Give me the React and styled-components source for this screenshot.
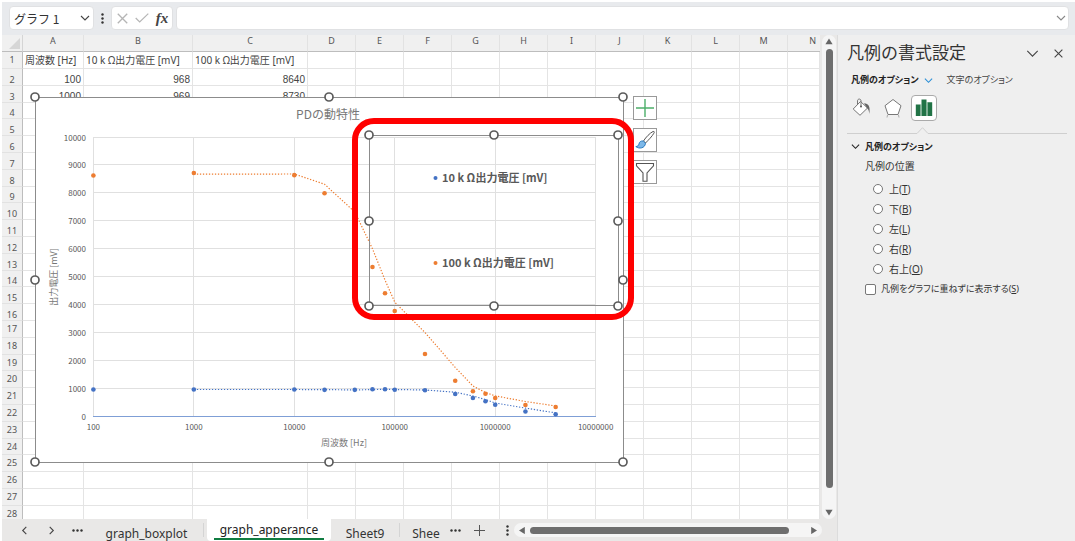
import React, { useState } from "react";
import styled, { createGlobalStyle, css } from "styled-components";

const jp = `"Noto Sans", "Noto Sans CJK JP", sans-serif`;
const jpUi = `"Noto Sans CJK JP", "Noto Sans", sans-serif`;

const GlobalStyle = createGlobalStyle`
  *, *::before, *::after { box-sizing: border-box; }
  body { margin: 0; background: #fff; overflow: hidden; }
  button, input { font: inherit; color: inherit; }
  svg { flex: none; }
`;

const Window = styled.div`
  display: flex;
  flex-direction: column;
  height: 100vh;
  padding: 2px 0 0 2px;
  font-family: ${jp};
  font-size: 12px;
  color: #333;
`;

const IconButton = styled.button`
  display: inline-flex;
  align-items: center;
  justify-content: center;
  width: ${(p) => p.$w || 20}px;
  height: 20px;
  flex: none;
  padding: 0;
  border: 0;
  background: none;
  color: ${(p) => p.$color || "#444"};
`;

/* Formula bar */
const FormulaBar = styled.header`
  display: flex;
  align-items: flex-start;
  flex: none;
  height: 33px;
  padding: 4px 6px 0 7px;
  background: #e8eaed;
`;

const Field = styled.div`
  display: flex;
  align-items: center;
  height: 24px;
  border: 1px solid #e0e1e3;
  border-radius: 4px;
  background: #fff;
`;

const NameBox = styled(Field)`
  width: 85px;
  padding-left: 4px;
`;

const NameInput = styled.input`
  width: 62px;
  height: 20px;
  padding: 0;
  border: 0;
  outline: 0;
  background: none;
  font-family: ${jpUi};
  font-size: 12px;
`;

const BarGrip = styled.div`
  display: flex;
  align-items: center;
  justify-content: center;
  width: 17px;
  height: 24px;
`;

const FormulaActions = styled(Field)`
  width: 62px;
  margin-right: 3px;
`;

const FormulaField = styled(Field)`
  flex: 1;
`;

const FormulaInput = styled.input`
  flex: 1;
  min-width: 0;
  height: 20px;
  border: 0;
  outline: 0;
  background: none;
`;

const Fx = styled.span`
  font-family: "Liberation Serif", serif;
  font-size: 15px;
  font-style: italic;
  font-weight: 700;
  line-height: 18px;
`;

/* Workspace */
const Workspace = styled.div`
  display: flex;
  flex: 1;
  min-height: 0;
`;

const Book = styled.main`
  display: flex;
  flex-direction: column;
  flex: 1;
  min-width: 0;
  background: #e9e8e7;
`;

const SheetRow = styled.div`
  display: flex;
  flex: 1;
  min-height: 0;
`;

const SheetView = styled.div`
  position: relative;
  flex: 1;
  min-width: 0;
  overflow: hidden;
  background: #fff;
`;

const Grid = styled.table`
  width: 100%;
  table-layout: fixed;
  border-collapse: separate;
  border-spacing: 0;
`;

const Col = styled.col`
  width: ${(p) => (p.$w ? `${p.$w}px` : "auto")};
`;

const ColumnHead = styled.th`
  height: 17px;
  padding: 0;
  border-right: 1px solid #e2e2e2;
  border-bottom: 1px solid #bdbdbd;
  background: #f0f0f0;
  color: #555;
  font-size: 9px;
  font-weight: 400;
  line-height: 12px;
  vertical-align: top;
  text-align: center;

  &:last-child {
    padding-right: 4px;
    border-right: 0;
    text-align: right;
  }
`;

const Corner = styled.td`
  padding: 0;
  border-right: 1px solid #d5d5d5;
  border-bottom: 1px solid #bdbdbd;
  background: #f0f0f0;
  line-height: 0;
  text-align: right;
`;

const Row = styled.tr`
  height: 17px;

  &:nth-child(5n + 4) {
    height: 16px;
  }
`;

const seat = css`
  padding: 0;
  line-height: 10px;
  vertical-align: ${(p) => (p.$low ? "bottom" : "middle")};
`;

const RowHead = styled.th`
  ${seat}
  border-right: 1px solid #bdbdbd;
  border-bottom: 1px solid #e2e2e2;
  background: #f0f0f0;
  color: #555;
  font-size: 9px;
  font-weight: 400;
  text-align: center;
`;

const Cell = styled.td`
  ${seat}
  padding-left: 2px;
  padding-right: 2px;
  border-right: 1px solid #e4e4e4;
  border-bottom: 1px solid #e4e4e4;
  color: #444;
  font-family: ${(p) => (p.$number ? `"Liberation Sans", sans-serif` : jp)};
  font-size: 10px;
  white-space: nowrap;
  text-align: ${(p) => (p.$number ? "right" : "left")};
`;

/* Items floating over the cells */
const ChartFrame = styled.figure`
  position: absolute;
  left: 28px;
  top: 57px;
  margin: 0;
  line-height: 0;
`;

const ChartTools = styled.div`
  position: absolute;
  left: 631px;
  top: 61px;
  display: flex;
  flex-direction: column;
  gap: 8px;
`;

const ChartTool = styled.button`
  display: flex;
  align-items: center;
  justify-content: center;
  width: 24px;
  height: 24px;
  padding: 0;
  border: 1px solid #999;
  background: #fff;
`;

const Highlight = styled.div`
  position: absolute;
  left: 350px;
  top: 83px;
  width: 282px;
  height: 202px;
  border: 6px solid #f00;
  border-radius: 22px;
  pointer-events: none;
`;

/* Scroll bars */
const VScroll = styled.div`
  display: flex;
  flex-direction: column;
  align-items: center;
  gap: 4px;
  width: 14px;
  margin: 0 1px 0 2px;
  padding: 3px 0;
  border-radius: 7px;
  background: #f5f5f5;
`;

const VThumb = styled.div`
  flex: 1;
  width: 7px;
  margin-bottom: 17px;
  border-radius: 4px;
  background: #6e6e6e;
`;

const HScroll = styled.div`
  display: flex;
  align-items: center;
  gap: 4px;
  flex: 1;
  height: 14px;
  margin-right: 15px;
  padding: 0 4px;
  border-radius: 7px;
  background: #f5f5f5;
`;

const HThumb = styled.div`
  flex: 1;
  height: 7px;
  margin-right: 17px;
  border-radius: 4px;
  background: #6e6e6e;
`;

/* Sheet tabs */
const TabBar = styled.nav`
  display: flex;
  align-items: center;
  flex: none;
  height: 22px;
  padding-left: 8px;
`;

const Tab = styled.button`
  display: flex;
  align-items: flex-end;
  justify-content: center;
  flex: none;
  width: ${(p) => p.$w}px;
  height: 22px;
  padding: 0;
  border: 0;
  background: none;
  color: #333;
  font-size: 12px;
  line-height: 14px;
  white-space: nowrap;
`;

const ActiveTab = styled(Tab)`
  margin-left: 3px;
  padding: 0 7px;
  border-radius: 0 0 4px 4px;
  background: #fff;
  color: #222;

  span {
    flex: 1;
    margin-bottom: 1px;
    border-bottom: 2px solid #107c41;
    line-height: 16px;
  }
`;

const TabDivider = styled.i`
  width: 1px;
  height: 14px;
  background: #d4d4d4;
`;

/* Format pane */
const Pane = styled.aside`
  flex: none;
  width: 238px;
  padding: 0 8px 0 9px;
  border-left: 1px solid #dcdcdc;
  background: #efefef;
  font-family: ${jp};
  font-size: 10px;
  font-feature-settings: "palt";
  line-height: 16px;
  color: #333;
`;

const PaneTitleRow = styled.div`
  display: flex;
  align-items: center;
  height: 36px;
  gap: 7px;
`;

const PaneTitle = styled.h2`
  flex: 1;
  margin: 0;
  color: #333;
  font-size: 17px;
  font-weight: 400;
  font-feature-settings: normal;
  line-height: 24px;
  white-space: nowrap;
`;

const PaneTabs = styled.div`
  display: flex;
  align-items: center;
  height: 18px;
  padding-left: 4px;
`;

const PaneTab = styled.button`
  display: flex;
  align-items: center;
  gap: 5px;
  margin-right: 14px;
  padding: 0;
  border: 0;
  background: none;
  font-size: 9px;
  font-weight: ${(p) => (p.$active ? 700 : 400)};
  color: ${(p) => (p.$active ? "#222" : "#444")};
`;

const IconTabs = styled.div`
  display: flex;
  align-items: center;
  gap: 5px;
  height: 38px;
  padding-left: 2px;
`;

const IconTab = styled.button`
  display: flex;
  align-items: center;
  justify-content: center;
  width: 26px;
  height: 26px;
  padding: 0;
  border: 1px solid ${(p) => (p.$active ? "#aaa" : "transparent")};
  border-radius: 4px;
  background: ${(p) => (p.$active ? "#fff" : "none")};
`;

const NotchedRule = styled.div`
  display: flex;
  align-items: flex-end;
  height: 7px;

  &::before, &::after {
    content: "";
    height: 1px;
    background: #cfcfcf;
  }
  &::before { width: 70px; }
  &::after { flex: 1; }
`;

const Section = styled.section`
  padding: 4px 0 0 4px;
`;

const SectionToggle = styled.button`
  display: flex;
  align-items: center;
  gap: 5px;
  height: 17px;
  padding: 0;
  border: 0;
  background: none;
  font-size: 9px;
  font-weight: 700;
  color: #222;
`;

const Options = styled.fieldset`
  display: flex;
  flex-direction: column;
  min-width: 0;
  margin: 0;
  padding: 3px 0 0 22px;
  border: 0;
`;

const OptionsTitle = styled.legend`
  float: left;
  margin: 0 0 5px -8px;
  padding: 0;
`;

const Option = styled.label`
  display: flex;
  align-items: center;
  gap: 6px;
  height: 20px;
  white-space: nowrap;
`;

const CheckOption = styled(Option)`
  gap: 5px;
  padding-left: 14px;
  font-size: 9px;
`;

const Radio = styled.input.attrs({ type: "radio" })`
  appearance: none;
  width: 10px;
  height: 10px;
  margin: 0;
  border: 1px solid #777;
  border-radius: 50%;
  background: #fff;
  &:checked { border: 3px solid #107c41; }
`;

const Check = styled.input.attrs({ type: "checkbox" })`
  appearance: none;
  width: 11px;
  height: 11px;
  margin: 0;
  border: 1px solid #777;
  border-radius: 2px;
  background: #fff;
  &:checked { background: #107c41; }
`;

const Chevron = ({ size = 9, turn = 0, color = "currentColor" }) => (
  <svg width={size} height={size} viewBox="0 0 10 10" fill="none" stroke={color} strokeWidth={11 / size} aria-hidden="true">
    <path d="M1 3l4 4 4-4" transform={`rotate(${turn} 5 5)`} />
  </svg>
);

const Arrow = ({ turn = 0 }) => (
  <svg width="8" height="7" viewBox="0 0 8 7" aria-hidden="true">
    <path d="M4 .5L7.6 6.3H.4z" fill="#666" transform={`rotate(${turn} 4 3.5)`} />
  </svg>
);

const Dots = ({ vertical }) => (
  <svg width={vertical ? 3 : 11} height={vertical ? 11 : 3} viewBox={vertical ? "0 0 3 11" : "0 0 11 3"} fill="#333" aria-hidden="true">
    {[1.5, 5.5, 9.5].map((n) => (
      <circle key={n} cx={vertical ? 1.5 : n} cy={vertical ? n : 1.5} r="1.2" />
    ))}
  </svg>
);

const Cross = ({ size = 10, color = "currentColor" }) => (
  <svg width={size} height={size} viewBox="0 0 10 10" stroke={color} strokeWidth="1.2" aria-hidden="true">
    <path d="M.7.7l8.6 8.6M9.3.7L.7 9.3" />
  </svg>
);

/* Chart */
const SERIES = [
  {
    name: "10 k Ω出力電圧 [mV]",
    color: "#4472c4",
    points: [[100, 968], [1000, 969], [10000, 970], [20000, 955], [40000, 955], [60000, 975], [80000, 978], [100000, 958], [200000, 939], [400000, 806], [600000, 663], [800000, 545], [1000000, 420], [2000000, 180], [4000000, 80]],
  },
  {
    name: "100 k Ω出力電圧 [mV]",
    color: "#ed7d31",
    points: [[100, 8640], [1000, 8730], [10000, 8650], [20000, 8000], [40000, 6660], [60000, 5360], [80000, 4415], [100000, 3780], [200000, 2240], [400000, 1283], [600000, 903], [800000, 817], [1000000, 663], [2000000, 412], [4000000, 340]],
  },
];

const px = (hz) => 93.4 + (Math.log10(hz) - 2) * 100.45;
const py = (mv) => 416.5 - mv * 0.0279;

/* Two-period moving average */
const trend = (points) =>
  points
    .slice(1)
    .map(([hz, mv], i) => `${px(hz).toFixed(1)},${py((mv + points[i][1]) / 2).toFixed(1)}`)
    .join(" ");

const handles = (xs, ys) =>
  ys.flatMap((y, j) => xs.filter((_, i) => !(i === 1 && j === 1)).map((x) => [x, y]));

const Handles = ({ xs, ys }) => (
  <g fill="#fff" stroke="#5c5c5c" strokeWidth="1.7">
    {handles(xs, ys).map(([x, y]) => (
      <circle key={`${x}-${y}`} cx={x} cy={y} r="4" />
    ))}
  </g>
);

const ChartSvg = styled.svg`
  overflow: visible;
  font-family: ${jpUi};
  fill: #595959;
`;

const Chart = () => (
  <ChartSvg width="600" height="376" viewBox="30 92 600 376" role="img" aria-label="PDの動特性">
    <rect x="35.5" y="97.5" width="588" height="365" fill="#fff" stroke="#8c8c8c" />
    <text x="328" y="119" fontSize="12" textAnchor="middle" fill="#777">PDの動特性</text>
    <g stroke="#e0e0e0" strokeWidth="1">
      {[...Array(10)].map((_, i) => (
        <line key={i} x1="93" x2="596" y1={Math.round(py((i + 1) * 1000)) - 0.5} y2={Math.round(py((i + 1) * 1000)) - 0.5} />
      ))}
      {[2, 3, 4, 5, 6, 7].map((e) => (
        <line key={e} y1="137" y2="416" x1={Math.floor(px(10 ** e)) + 0.5} x2={Math.floor(px(10 ** e)) + 0.5} />
      ))}
    </g>
    <line x1="93" x2="596" y1="416.5" y2="416.5" stroke="#7f9fd6" />
    <g fontSize="8">
      {[...Array(11)].map((_, i) => (
        <text key={i} x="86" y={py(i * 1000) + 3} textAnchor="end">{i * 1000}</text>
      ))}
      {[2, 3, 4, 5, 6, 7].map((e) => (
        <text key={e} x={px(10 ** e)} y="430" textAnchor="middle">{10 ** e}</text>
      ))}
    </g>
    <text x="344" y="446" fontSize="9" textAnchor="middle" fill="#777">周波数 [Hz]</text>
    <text transform="translate(57 277) rotate(-90)" fontSize="9" textAnchor="middle" fill="#777">出力電圧 [mV]</text>
    {SERIES.map((s) => (
      <g key={s.name}>
        <polyline points={trend(s.points)} fill="none" stroke={s.color} strokeWidth="1.2" strokeDasharray="1.3 1.7" />
        {s.points.map(([hz, mv]) => (
          <circle key={hz} cx={px(hz)} cy={py(mv)} r="2.3" fill={s.color} />
        ))}
      </g>
    ))}
    <rect x="369.5" y="135.5" width="249" height="170" fill="none" stroke="#8c8c8c" />
    {SERIES.map((s, i) => (
      <g key={s.name}>
        <circle cx="435.5" cy={178 + i * 85} r="2" fill={s.color} />
        <text x="442" y={182 + i * 85} fontSize="11" fontWeight="700">{s.name}</text>
      </g>
    ))}
    <Handles xs={[35, 329, 623]} ys={[97, 280, 462]} />
    <Handles xs={[369, 494, 618]} ys={[135, 221, 306]} />
  </ChartSvg>
);

const COLUMNS = [61, 109, 115, 48, 48, 48, 48, 48, 48, 48, 48, 48, 48, null];
const letter = (i) => String.fromCharCode(65 + i);
const CELLS = {
  1: ["周波数 [Hz]", "10 k Ω出力電圧 [mV]", "100 k Ω出力電圧 [mV]"],
  2: [100, 968, 8640],
  3: [1000, 969, 8730],
};

const Sheet = () => (
  <Grid>
    <colgroup>
      <Col $w={21} />
      {COLUMNS.map((w, i) => <Col key={i} $w={w} />)}
    </colgroup>
    <thead>
      <tr>
        <Corner>
          <svg width="14" height="13" viewBox="0 0 14 13" aria-hidden="true"><path d="M12 1v11H1z" fill="#d6d6d6" /></svg>
        </Corner>
        {COLUMNS.map((_, i) => <ColumnHead key={i} scope="col">{letter(i)}</ColumnHead>)}
      </tr>
    </thead>
    <tbody>
      {[...Array(28)].map((_, r) => {
        const n = r + 1;
        const low = n > 1 && n < 17;
        return (
          <Row key={n}>
            <RowHead scope="row" $low={low}>{n}</RowHead>
            {COLUMNS.map((_, c) => {
              const value = CELLS[n]?.[c];
              return <Cell key={c} $low={low} $number={typeof value === "number"}>{value}</Cell>;
            })}
          </Row>
        );
      })}
    </tbody>
  </Grid>
);

const POSITIONS = [["上", "T"], ["下", "B"], ["左", "L"], ["右", "R"], ["右上", "O"]];

const FormatPane = () => {
  const [position, setPosition] = useState(null);
  return (
    <Pane>
      <PaneTitleRow>
        <PaneTitle>凡例の書式設定</PaneTitle>
        <IconButton aria-label="作業ウィンドウのオプション"><Chevron size={13} /></IconButton>
        <IconButton $w={18} aria-label="閉じる"><Cross size={9} /></IconButton>
      </PaneTitleRow>
      <PaneTabs>
        <PaneTab $active>凡例のオプション<Chevron color="#2b8fd6" /></PaneTab>
        <PaneTab>文字のオプション</PaneTab>
      </PaneTabs>
      <IconTabs>
        <IconTab aria-label="塗りつぶしと線">
          <svg width="20" height="20" viewBox="0 0 20 20" fill="none" stroke="#777" strokeWidth="1">
            <path d="M8.5 3.5l7 6.5-7.5 7.3L1.2 11z" fill="#fff" />
            <path d="M5.5 7V2.8C5.5.5 9 .5 9 2.8V8" />
            <circle cx="9" cy="8.6" r="1" fill="#555" stroke="none" />
            <path d="M12 5.2c4.5.3 6.5 3 5.3 10.800-.2-3-1-5-2.300-6z" fill="#666" stroke="none" />
          </svg>
        </IconTab>
        <IconTab aria-label="効果">
          <svg width="20" height="20" viewBox="0 0 20 20" fill="none" stroke="#777">
            <path d="M10 1.5l8 6.2-3 8.8H5L2 7.7z" fill="#fff" />
            <path d="M4.5 17l-.5 2.5M15.5 17l.5 2.5" stroke="#aaa" />
          </svg>
        </IconTab>
        <IconTab $active aria-label="凡例のオプション">
          <svg width="18" height="18" viewBox="0 0 18 18" fill="#217346">
            <path d="M.8 5.5h4.7V17H.8zM6.500.5h5V17h-5zM12.5 3.3h4.7V17h-4.7z" />
            <path d="M5.5 5.5h1V17h-1zM11.5 3.3h1V17h-1z" fill="#6fa586" />
          </svg>
        </IconTab>
      </IconTabs>
      <NotchedRule>
        <svg width="11" height="7" viewBox="0 0 11 7" fill="none" stroke="#cfcfcf"><path d="M0 6.500L5.500.7 11 6.500" /></svg>
      </NotchedRule>
      <Section>
        <SectionToggle aria-expanded="true"><Chevron />凡例のオプション</SectionToggle>
        <Options>
          <OptionsTitle>凡例の位置</OptionsTitle>
          {POSITIONS.map(([name, key]) => (
            <Option key={key}>
              <Radio name="position" checked={position === key} onChange={() => setPosition(key)} />
              <span>{name}(<u>{key}</u>)</span>
            </Option>
          ))}
        </Options>
        <CheckOption>
          <Check />
          <span>凡例をグラフに重ねずに表示する(<u>S</u>)</span>
        </CheckOption>
      </Section>
    </Pane>
  );
};

export default function App() {
  return (
    <Window>
      <GlobalStyle />
      <FormulaBar>
        <NameBox>
          <NameInput aria-label="名前ボックス" defaultValue="グラフ 1" />
          <IconButton $w={18} aria-label="名前の一覧"><Chevron size={10} /></IconButton>
        </NameBox>
        <BarGrip><Dots vertical /></BarGrip>
        <FormulaActions>
          <IconButton aria-label="キャンセル" $color="#b5b5b5"><Cross size={11} /></IconButton>
          <IconButton aria-label="入力" $color="#b5b5b5">
            <svg width="14" height="10" viewBox="0 0 14 10" fill="none" stroke="currentColor" strokeWidth="1.2"><path d="M.7 5l4 4L13.300.6" /></svg>
          </IconButton>
          <IconButton aria-label="関数の挿入"><Fx>fx</Fx></IconButton>
        </FormulaActions>
        <FormulaField>
          <FormulaInput aria-label="数式バー" />
          <IconButton $w={15} aria-label="数式バーの展開" $color="#888"><Chevron size={10} /></IconButton>
        </FormulaField>
      </FormulaBar>
      <Workspace>
        <Book>
          <SheetRow>
            <SheetView>
              <Sheet />
              <ChartFrame><Chart /></ChartFrame>
              <ChartTools>
                <ChartTool aria-label="グラフ要素">
                  <svg width="20" height="20" viewBox="0 0 20 20" stroke="#4caf6a" strokeWidth="1.4"><path d="M10 1v18M1 10h18" /></svg>
                </ChartTool>
                <ChartTool aria-label="グラフ スタイル">
                  <svg width="20" height="20" viewBox="0 0 20 20" fill="none" stroke="#555">
                    <path d="M8.5 11C11 7 15 3 18 1.500c1.500-.5 1.500.8.9 1.700C17 6.500 13.500 10 10.500 13z" fill="#fff" />
                    <path d="M8.300 11c-2.500-.3-4 .8-4.300 3-.3 1.700-1.500 2.400-3.200 2.600 3.500 2.600 9.200 1.700 9.700-3.400z" fill="#7db8e8" stroke="#2b7cc0" />
                  </svg>
                </ChartTool>
                <ChartTool aria-label="グラフ フィルター">
                  <svg width="20" height="20" viewBox="0 0 20 20" fill="#fff" stroke="#555" strokeWidth="1.1"><path d="M1.5 1.5h17v2.300L12 11v8.200H8V11L1.500 3.800z" /></svg>
                </ChartTool>
              </ChartTools>
              <Highlight />
            </SheetView>
            <VScroll>
              <Arrow />
              <VThumb />
              <Arrow turn={180} />
            </VScroll>
          </SheetRow>
          <TabBar>
            <IconButton $w={28} aria-label="前のシート"><Chevron turn={90} /></IconButton>
            <IconButton $w={26} aria-label="次のシート"><Chevron turn={270} /></IconButton>
            <IconButton $w={26} aria-label="すべてのシート"><Dots /></IconButton>
            <Tab $w={113}>graph_boxplot</Tab>
            <TabDivider />
            <ActiveTab $w={124}><span>graph_apperance</span></ActiveTab>
            <Tab $w={68}>Sheet9</Tab>
            <TabDivider />
            <Tab $w={52}>Shee</Tab>
            <IconButton $w={6} aria-label="その他のシート"><Dots /></IconButton>
            <IconButton $w={42} aria-label="新しいシート">
              <svg width="11" height="11" viewBox="0 0 11 11" stroke="#555"><path d="M5.5 0v11M0 5.5h11" /></svg>
            </IconButton>
            <IconButton $w={14} aria-label="サイズ変更"><Dots vertical /></IconButton>
            <HScroll>
              <Arrow turn={270} />
              <HThumb />
              <Arrow turn={90} />
            </HScroll>
          </TabBar>
        </Book>
        <FormatPane />
      </Workspace>
    </Window>
  );
}
